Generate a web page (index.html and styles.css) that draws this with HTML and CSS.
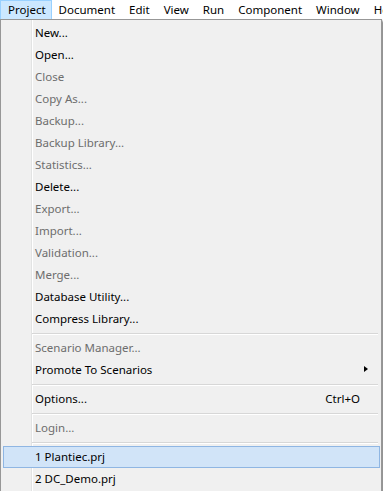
FILE: index.html
```html
<!DOCTYPE html>
<html lang="en">
<head>
    <meta charset="UTF-8">
    <title>Project menu</title>
    <link rel="stylesheet" href="styles.css">
</head>
<body>
    <div class="menubar">
        <span class="bar-item open">Project</span>
        <span class="bar-item">Document</span>
        <span class="bar-item">Edit</span>
        <span class="bar-item">View</span>
        <span class="bar-item">Run</span>
        <span class="bar-item">Component</span>
        <span class="bar-item">Window</span>
        <span class="bar-item">Help</span>
    </div>

    <div class="dropdown">
        <div class="item">New...</div>
        <div class="item">Open...</div>
        <div class="item disabled">Close</div>
        <div class="item disabled">Copy As...</div>
        <div class="item disabled">Backup...</div>
        <div class="item disabled">Backup Library...</div>
        <div class="item disabled">Statistics...</div>
        <div class="item">Delete...</div>
        <div class="item disabled">Export...</div>
        <div class="item disabled">Import...</div>
        <div class="item disabled">Validation...</div>
        <div class="item disabled">Merge...</div>
        <div class="item">Database Utility...</div>
        <div class="item">Compress Library...</div>
        <div class="sep"></div>
        <div class="item disabled">Scenario Manager...</div>
        <div class="item">Promote To Scenarios<span class="arrow"></span></div>
        <div class="sep"></div>
        <div class="item">Options...<span class="shortcut">Ctrl+O</span></div>
        <div class="sep"></div>
        <div class="item disabled">Login...</div>
        <div class="sep"></div>
        <div class="item hover">1 Plantiec.prj</div>
        <div class="item">2 DC_Demo.prj</div>
    </div>
</body>
</html>
```

FILE: styles.css
```css
body {
    margin: 0;
    width: 383px;
    height: 491px;
    overflow: hidden;
    background-color: #fff;
    font-family: "Noto Sans", "Open Sans", sans-serif;
    font-size: 11.5px;
    color: #000;
}
.menubar {
    display: flex;
    height: 19px;
    background-color: #fff;
    white-space: nowrap;
    overflow: hidden;
}
.bar-item {
    padding: 0 6px;
    line-height: 18px;
    border: 1px solid transparent;
    border-bottom: none;
}
.bar-item.open {
    background-color: #cce8ff;
    border-color: #99d1ff;
    padding-left: 7px;
    padding-right: 5px;
}
.dropdown {
    width: 380px;
    border: 1px solid #979797;
    padding: 2px 0 1px;
    background: linear-gradient(to right, transparent 30px, #e2e3e3 30px, #e2e3e3 31px, #fff 31px, #fff 32px, transparent 32px), #f0f0f0;
    box-shadow: 2px 2px 2px rgba(0, 0, 0, 0.45);
}
.item {
    position: relative;
    display: flex;
    height: 22px;
    line-height: 22px;
    padding-left: 34px;
    padding-right: 21px;
    white-space: nowrap;
}
.item.disabled {
    color: #6d6d6d;
}
.item.hover {
    margin: 0 1px 0 2px;
    height: 20px;
    line-height: 20px;
    padding-left: 31px;
    border: 1px solid #8fb6e3;
    background-color: #d1e4f8;
}
.shortcut {
    margin-left: auto;
}
.arrow {
    margin-left: auto;
    margin-top: 7px;
    margin-right: -8px;
    width: 0;
    height: 0;
    border-top: 3.5px solid transparent;
    border-bottom: 3.5px solid transparent;
    border-left: 4px solid #000;
}
.sep {
    height: 7px;
    margin: 0 3px 0 31px;
    background: linear-gradient(to bottom, transparent 3px, #d7d7d7 3px, #d7d7d7 4px, #fff 4px, #fff 5px, transparent 5px);
}
```
